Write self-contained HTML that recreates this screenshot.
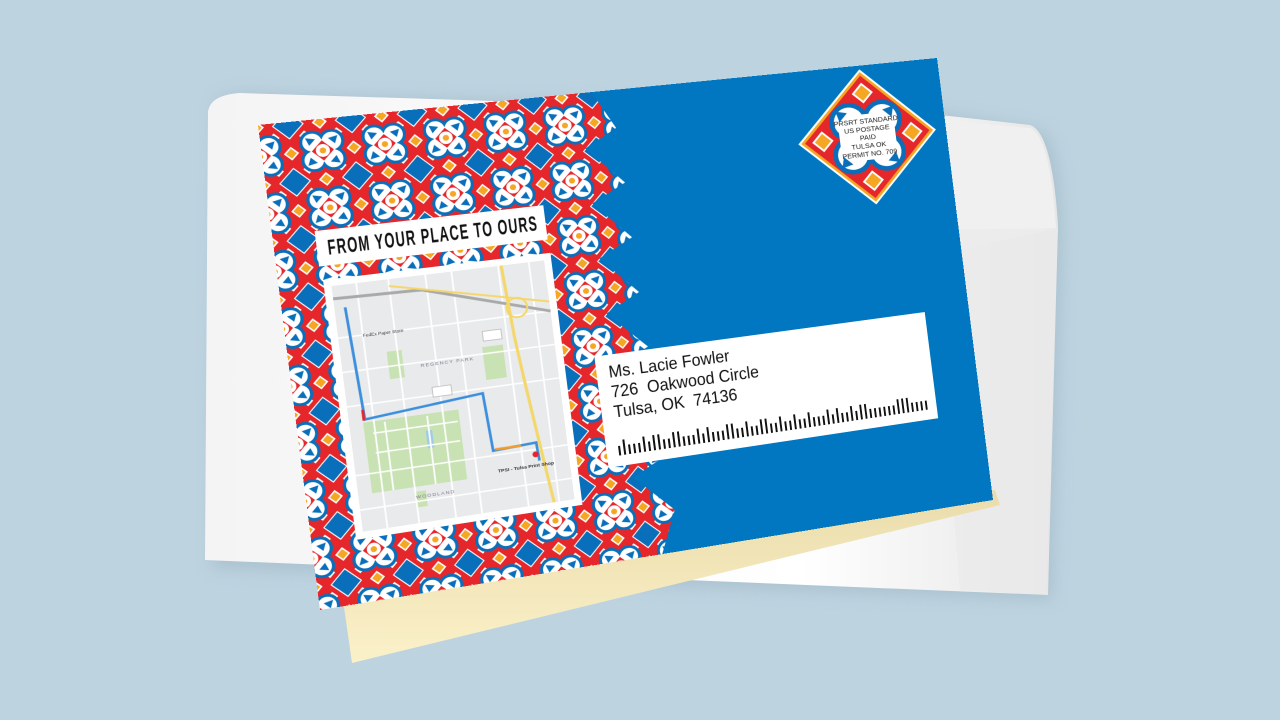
<!DOCTYPE html>
<html><head><meta charset="utf-8">
<style>
html,body{margin:0;padding:0;width:1280px;height:720px;overflow:hidden;background:#bdd3e0;font-family:"Liberation Sans",sans-serif}
#bg{position:absolute;left:0;top:0}
#card{position:absolute;left:0;top:0;width:680px;height:490px;transform-origin:0 0;
transform:matrix3d(1.13287,-0.09022,0,0.00014337, 0.12706,0.99080,0,0.00000164, 0,0,1,0, 258,125,0,1);
background:#0077c0;overflow:hidden}
#card svg{position:absolute;left:0;top:0}
.title{position:absolute;left:39px;top:112px;width:218px;height:36px;background:#fff;overflow:hidden}
.title span{position:absolute;left:10px;top:0;font-family:"Liberation Sans",sans-serif;font-weight:bold;font-size:18px;letter-spacing:1.6px;
color:#111;line-height:36px;white-space:nowrap;transform-origin:0 50%;transform:scale(0.67,1.2)}
.map{position:absolute;left:41px;top:162px;width:217px;height:264px;background:#fff}
.label{position:absolute;left:288px;top:275px;width:344px;height:117px;background:#fff}
.addr{position:absolute;left:12px;top:8px;font-size:18px;line-height:21px;color:#111;white-space:pre;transform:scaleX(0.9);transform-origin:0 0}
.stamp{position:absolute;left:555px;top:56px;width:80px;font-size:7.6px;line-height:9px;text-align:center;color:#222}
</style></head><body>
<svg id="bg" width="1280" height="720">
<defs>
<linearGradient id="env" x1="0" y1="0" x2="1" y2="0">
<stop offset="0" stop-color="#f4f4f4"/><stop offset="0.7" stop-color="#ffffff"/><stop offset="1" stop-color="#e6e6e6"/></linearGradient>
<linearGradient id="yel" x1="0" y1="0" x2="0" y2="1">
<stop offset="0" stop-color="#eadcab"/><stop offset="1" stop-color="#fbf1c9"/></linearGradient>
<filter id="sh" x="-10%" y="-10%" width="120%" height="130%"><feGaussianBlur stdDeviation="8"/></filter>
</defs>
<path d="M215 110 Q215 96 240 94 L930 112 L1040 130 Q1060 140 1062 230 L1052 600 L212 568 Z" fill="#9fb6c4" filter="url(#sh)" opacity="0.6"/>
<path d="M208 112 Q210 95 240 93 L940 115 L1030 125 Q1052 132 1058 225 L1048 595 L205 560 Z" fill="url(#env)"/>
<path d="M940 120 L1030 128 Q1050 136 1056 228 L960 250 Z" fill="#f0f0f0"/>
<path d="M930 230 L1058 228 L1046 594 L960 590 Z" fill="#e9e9e9" opacity="0.7"/>
<path d="M343 600 L352 663 L1000 505 L995 490 Z" fill="url(#yel)"/>
</svg>
<div id="card">
<svg width="680" height="490">
<defs>
<pattern id="tile" x="27" y="3" width="58" height="58" patternUnits="userSpaceOnUse">
<rect width="58" height="58" fill="#e5262b"/>
<g fill="#0a6fba" stroke="#fff" stroke-width="1">
<polygon points="0,-14 14,0 0,14 -14,0"/><polygon points="58,-14 72,0 58,14 44,0"/>
<polygon points="0,44 14,58 0,72 -14,58"/><polygon points="58,44 72,58 58,72 44,58"/></g>
<g fill="#f5a623" stroke="#fff" stroke-width="1.5">
<polygon points="29,-6 35,0 29,6 23,0"/><polygon points="29,52 35,58 29,64 23,58"/>
<polygon points="0,23 6,29 0,35 -6,29"/><polygon points="58,23 64,29 58,35 52,29"/>
<polygon points="14,8 18,12 14,16 10,12"/><polygon points="44,8 48,12 44,16 40,12"/>
<polygon points="14,42 18,46 14,50 10,46"/><polygon points="44,42 48,46 44,50 40,46"/></g>
<g fill="#0a6fba"><circle cx="20" cy="20" r="12"/><circle cx="38" cy="20" r="12"/><circle cx="20" cy="38" r="12"/><circle cx="38" cy="38" r="12"/></g>
<g fill="#fff"><circle cx="20" cy="20" r="9"/><circle cx="38" cy="20" r="9"/><circle cx="20" cy="38" r="9"/><circle cx="38" cy="38" r="9"/></g>
<g fill="#0a6fba"><path d="M14 15 L23 17 L17 23 Z"/><path d="M44 15 L35 17 L41 23 Z"/><path d="M14 43 L23 41 L17 35 Z"/><path d="M44 43 L35 41 L41 35 Z"/></g>
<polygon points="29,18 40,29 29,40 18,29" fill="#e5262b" stroke="#fff" stroke-width="1"/>
<circle cx="29" cy="29" r="6.5" fill="#fff"/><circle cx="29" cy="29" r="3" fill="#f5a623"/>
</pattern>
</defs>
<path d="M0 0 L318 0 L338 40 L305 58 L340 98 L305 116 L340 156 L305 174 L340 214 L305 232 L342 272 L307 290 L344 330 L309 348 L346 388 L311 406 L348 446 L330 490 L0 490 Z" fill="url(#tile)"/>
<g transform="translate(595,78)">
<polygon points="0,-74 74,0 0,74 -74,0" fill="#fff"/>
<polygon points="0,-71 71,0 0,71 -71,0" fill="#f5a623"/>
<polygon points="0,-67 67,0 0,67 -67,0" fill="#e5262b"/>
<g fill="#f5a623" stroke="#fff" stroke-width="2"><polygon points="0,-58 10,-48 0,-38 -10,-48"/><polygon points="0,58 10,48 0,38 -10,48"/><polygon points="-58,0 -48,10 -38,0 -48,-10"/><polygon points="58,0 48,10 38,0 48,-10"/></g>
<g fill="#0a6fba"><circle cx="-18" cy="-18" r="21"/><circle cx="18" cy="-18" r="21"/><circle cx="-18" cy="18" r="21"/><circle cx="18" cy="18" r="21"/></g>
<g fill="#fff"><circle cx="-18" cy="-18" r="16"/><circle cx="18" cy="-18" r="16"/><circle cx="-18" cy="18" r="16"/><circle cx="18" cy="18" r="16"/><rect x="-30" y="-25" width="60" height="50"/></g>
<g fill="#0a6fba"><path d="M-31 -31 L-19 -28 L-28 -19 Z"/><path d="M31 -31 L19 -28 L28 -19 Z"/><path d="M-31 31 L-19 28 L-28 19 Z"/><path d="M31 31 L19 28 L28 19 Z"/></g>
</g>
</svg>
<div class="stamp">PRSRT STANDARD<br>US POSTAGE<br>PAID<br>TULSA OK<br>PERMIT NO. 709</div>
<div class="title"><span>FROM YOUR PLACE TO OURS</span></div>
<div class="map">
<svg width="217" height="264" viewBox="0 0 217 264">
<rect x="7" y="7" width="203" height="250" fill="#e9eaec"/>
<g fill="#c8e2b3"><rect x="20" y="148" width="90" height="72"/><rect x="50" y="80" width="14" height="28"/><rect x="140" y="88" width="20" height="34"/><rect x="60" y="225" width="10" height="16"/></g>
<rect x="77" y="165" width="6" height="18" fill="#9ecbe8"/>
<g stroke="#fff" stroke-width="1.6" fill="none">
<path d="M7 60 H210 M7 95 H210 M7 130 H210 M7 200 H210 M7 235 H210"/>
<path d="M30 7 V257 M60 7 V257 M95 7 V257 M120 7 V257 M165 7 V257 M195 7 V257"/>
<path d="M28 160 H108 M28 180 H108 M40 150 V220 M80 150 V220"/>
</g>
<path d="M7 20 L90 22 L210 60" stroke="#a9a9a9" stroke-width="3" fill="none"/>
<path d="M60 14 L210 50" stroke="#f4d76b" stroke-width="2" fill="none"/>
<path d="M168 7 L172 80 Q176 130 190 257" stroke="#f4d76b" stroke-width="3" fill="none"/>
<circle cx="178" cy="52" r="10" stroke="#f4d76b" stroke-width="2" fill="none"/>
<path d="M17 30 L22 145 L135 135 L138 195 L180 193 L181 212" stroke="#3b8fdc" stroke-width="2.6" fill="none"/>
<path d="M140 194 H165" stroke="#f39c2b" stroke-width="2.6"/>
<path d="M21 135 V146" stroke="#e5262b" stroke-width="2.6"/>
<circle cx="178" cy="205" r="3" fill="#e5262b"/>
<text x="140" y="218" font-size="5" font-weight="bold" fill="#333">TPSI - Tulsa Print Shop</text>
<text x="80" y="100" font-size="5" fill="#778" letter-spacing="1">REGENCY PARK</text>
<text x="60" y="232" font-size="5" fill="#778" letter-spacing="1">WOODLAND</text>
<text x="30" y="62" font-size="4.5" fill="#333">FedEx Paper Store</text>
<rect x="88" y="122" width="18" height="10" fill="#fff" stroke="#999" stroke-width=".5"/>
<rect x="142" y="72" width="18" height="10" fill="#fff" stroke="#999" stroke-width=".5"/>
</svg>
</div>
<div class="label">
<div class="addr">Ms. Lacie Fowler
726  Oakwood Circle
Tulsa, OK  74136</div>
<svg width="344" height="117" style="position:absolute;left:0;top:0">
<g fill="#111" id="bars"></g>
</svg>
</div>
</div>
<script>
var g=document.getElementById('bars'),s='';var seed=7;
for(var i=0;i<65;i++){seed=(seed*9301+49297)%233280;var t=seed/233280>0.5;var x=12+i*5;
s+='<rect x="'+x+'" y="'+(t?90:96)+'" width="2" height="'+(t?16:10)+'"/>';}
g.innerHTML=s;
</script>
</body></html>
